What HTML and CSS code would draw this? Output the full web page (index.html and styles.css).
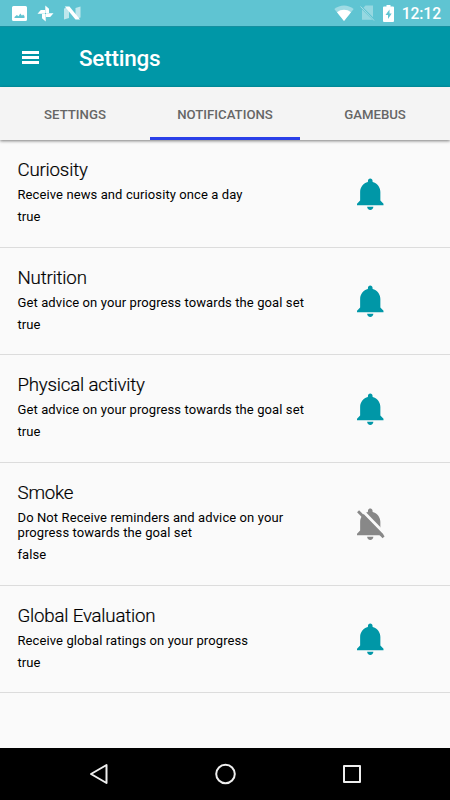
FILE: index.html
```html
<!DOCTYPE html>
<html lang="en">
<head>
  <meta charset="UTF-8">
  <meta name="viewport" content="width=device-width, initial-scale=1.0">
  <title>Settings</title>
  <link rel="stylesheet" href="styles.css">
</head>
<body>
  <svg class="defs">
    <symbol id="bell" viewBox="0 0 512 512">
      <path d="M256 464c22.8 0 41.4-18.7 41.4-41.6h-82.8c0 22.9 18.6 41.6 41.4 41.6zm134.6-124.8V224.8c0-63.4-44.5-117.5-103.5-131V79.2c0-17.7-13.5-31.2-31.1-31.2s-31.1 13.5-31.1 31.2v14.6c-59 13.5-103.5 67.6-103.5 131v114.4L80 380.8v20.8h352v-20.8l-41.4-41.6z"/>
    </symbol>
  </svg>

  <div class="status-bar">
    <div class="status-left">
      <svg width="15" height="15" viewBox="0 0 15 15"><path fill="#fff" fill-rule="evenodd" d="M1.500 0h12A1.500 1.500 0 0 1 15 1.500v12a1.500 1.500 0 0 1-1.500 1.500h-12A1.500 1.500 0 0 1 0 13.500v-12A1.500 1.500 0 0 1 1.500 0zM2.500 12h10V10L11 8.500 10 9.800 8.300 7.500 6.500 10.300 4.800 9 2.500 11z"/></svg>
      <svg width="17" height="17" viewBox="0 0 17 17"><path fill="#fff" d="M8.300 8V.5L12 3.800V8zM9 8.300h7.500L13.200 12H9zM8.700 9v7.500L5 13.200V9zM8 8.700H.5L3.800 5H8z"/></svg>
      <svg width="17" height="14" viewBox="0 0 17 14"><path fill="#fff" opacity=".6" d="M0 2.500L5 1v11L0 13.500zM11.500 2L16.500.5v11l-5 1.500z"/><path fill="#fff" d="M.8.500H5.500L16 13.500H11.500z"/></svg>
    </div>
    <div class="status-right">
      <svg width="20" height="16" viewBox="0 0 20 16"><path fill="#fff" opacity=".4" d="M10 16L.3 4C6-.8 14-.8 19.700 4z"/><path fill="#fff" d="M10 16L3 7.200c4-3.300 10-3.300 14 0z"/></svg>
      <svg width="15" height="16" viewBox="0 0 15 16"><path fill="#fff" opacity=".35" d="M2.500 3.700L5.500.500h7.500v11.700L3.500 2.700zM2 4.500L12.300 14.800H2z"/><path stroke="#fff" opacity=".45" d="M.5 1.500l13.500 14"/></svg>
      <svg width="11" height="17" viewBox="0 0 11 17"><path fill="#fff" fill-rule="evenodd" d="M3.500 0h4v1.500H10a1 1 0 0 1 1 1V16a1 1 0 0 1-1 1H1a1 1 0 0 1-1-1V2.500a1 1 0 0 1 1-1h2.500zM6.500 4.500L2.500 10H5v4l3.700-5.500H6.500z"/></svg>
      <span class="clock">12:12</span>
    </div>
  </div>

  <header class="toolbar">
    <div class="menu"><span></span><span></span><span></span></div>
    <h1>Settings</h1>
  </header>

  <nav class="tabs">
    <a class="tab">SETTINGS</a>
    <a class="tab active">NOTIFICATIONS</a>
    <a class="tab">GAMEBUS</a>
  </nav>

  <main class="list">
    <div class="item">
      <div class="item-text">
        <h2>Curiosity</h2>
        <p class="desc">Receive news and curiosity once a day</p>
        <p class="value">true</p>
      </div>
      <svg class="bell"><use href="#bell"/></svg>
    </div>
    <div class="item">
      <div class="item-text">
        <h2>Nutrition</h2>
        <p class="desc">Get advice on your progress towards the goal set</p>
        <p class="value">true</p>
      </div>
      <svg class="bell"><use href="#bell"/></svg>
    </div>
    <div class="item">
      <div class="item-text">
        <h2>Physical activity</h2>
        <p class="desc">Get advice on your progress towards the goal set</p>
        <p class="value">true</p>
      </div>
      <svg class="bell"><use href="#bell"/></svg>
    </div>
    <div class="item">
      <div class="item-text">
        <h2>Smoke</h2>
        <p class="desc">Do Not Receive reminders and advice on your<br>progress towards the goal set</p>
        <p class="value">false</p>
      </div>
      <svg class="bell off" viewBox="0 0 512 512">
        <use href="#bell"/>
        <path class="gap" d="M130 54L450 382"/>
        <path class="slash" d="M94 84L434 430"/>
      </svg>
    </div>
    <div class="item">
      <div class="item-text">
        <h2>Global Evaluation</h2>
        <p class="desc">Receive global ratings on your progress</p>
        <p class="value">true</p>
      </div>
      <svg class="bell"><use href="#bell"/></svg>
    </div>
  </main>

  <footer class="nav-bar">
    <svg width="20" height="22" viewBox="0 0 20 22"><path d="M17.500 2v18L2 11z"/></svg>
    <svg width="22" height="22" viewBox="0 0 22 22"><circle cx="10.500" cy="11" r="9.300"/></svg>
    <svg width="20" height="20" viewBox="0 0 20 20"><rect x="2" y="2" width="16" height="16"/></svg>
  </footer>
</body>
</html>
```

FILE: styles.css
```css
* {
  box-sizing: border-box;
}
body {
  margin: 0;
  height: 800px;
  display: flex;
  flex-direction: column;
  overflow: hidden;
  font-family: Roboto, sans-serif;
  background-color: #fafafa;
  color: #000;
}
h1, h2, p {
  margin: 0;
  font-weight: 400;
}
.defs {
  display: none;
}
.status-bar {
  flex: none;
  height: 26px;
  padding: 0 9px 0 12px;
  display: flex;
  justify-content: space-between;
  align-items: center;
  background-color: #5fc4d2;
}
.status-left {
  display: flex;
  align-items: center;
  gap: 10px;
}
.status-right {
  display: flex;
  align-items: center;
}
.status-right svg:nth-child(1) {
  margin-right: 6px;
}
.status-right svg:nth-child(2) {
  margin-right: 8px;
}
.clock {
  margin-left: 8px;
  padding-top: 2px;
  font-size: 15.7px;
  font-weight: 500;
  line-height: 24px;
  letter-spacing: -0.1px;
  color: #fff;
}
.toolbar {
  flex: none;
  height: 61px;
  padding: 1px 22px 0;
  display: flex;
  align-items: center;
  background-color: #0097a7;
  border-top: 1px solid #148fa0;
}
.menu {
  width: 17px;
  height: 13px;
  display: flex;
  flex-direction: column;
  justify-content: space-between;
}
.menu span {
  height: 3px;
  background-color: #fff;
}
.toolbar h1 {
  margin-left: 40px;
  font-size: 22.5px;
  font-weight: 500;
  letter-spacing: -0.25px;
  color: #fff;
}
.tabs {
  flex: none;
  height: 53px;
  display: flex;
  background-color: #f4f4f4;
  box-shadow: 0 1px 3px rgba(0, 0, 0, 0.5);
}
.tab {
  flex: 1;
  height: 53px;
  padding-top: 3px;
  text-align: center;
  font-size: 13.2px;
  font-weight: 500;
  line-height: 49px;
  color: #666;
}
.tab.active {
  border-bottom: 3px solid #2a3fe8;
}
.list {
  flex: 1;
}
.item {
  height: 107.5px;
  padding-left: 17.5px;
  display: flex;
  align-items: center;
  border-bottom: 1px solid #dcdcdc;
}
.item:nth-child(4) {
  height: 123px;
}
.item-text {
  width: 333.5px;
  padding-bottom: 3px;
}
.item h2 {
  font-size: 18.7px;
  font-weight: 300;
  line-height: 22px;
  letter-spacing: -0.2px;
  -webkit-text-stroke: 0.2px #000;
}
.desc {
  margin-top: 6px;
  font-size: 13px;
  line-height: 15.5px;
  letter-spacing: 0.1px;
}
.value {
  margin-top: 6.5px;
  font-size: 13px;
  line-height: 15px;
  letter-spacing: 0.1px;
}
.bell {
  width: 38.5px;
  height: 38.5px;
  margin-top: 1px;
  fill: #0097a7;
}
.bell.off {
  fill: #888;
}
.gap {
  stroke: #fafafa;
  stroke-width: 38;
}
.slash {
  stroke: #888;
  stroke-width: 38;
}
.nav-bar {
  flex: none;
  height: 52px;
  padding: 0 88px 0 89px;
  display: flex;
  justify-content: space-between;
  align-items: center;
  background-color: #000;
}
.nav-bar svg {
  fill: none;
  stroke: #eee;
  stroke-width: 2;
  stroke-linejoin: round;
}
```
